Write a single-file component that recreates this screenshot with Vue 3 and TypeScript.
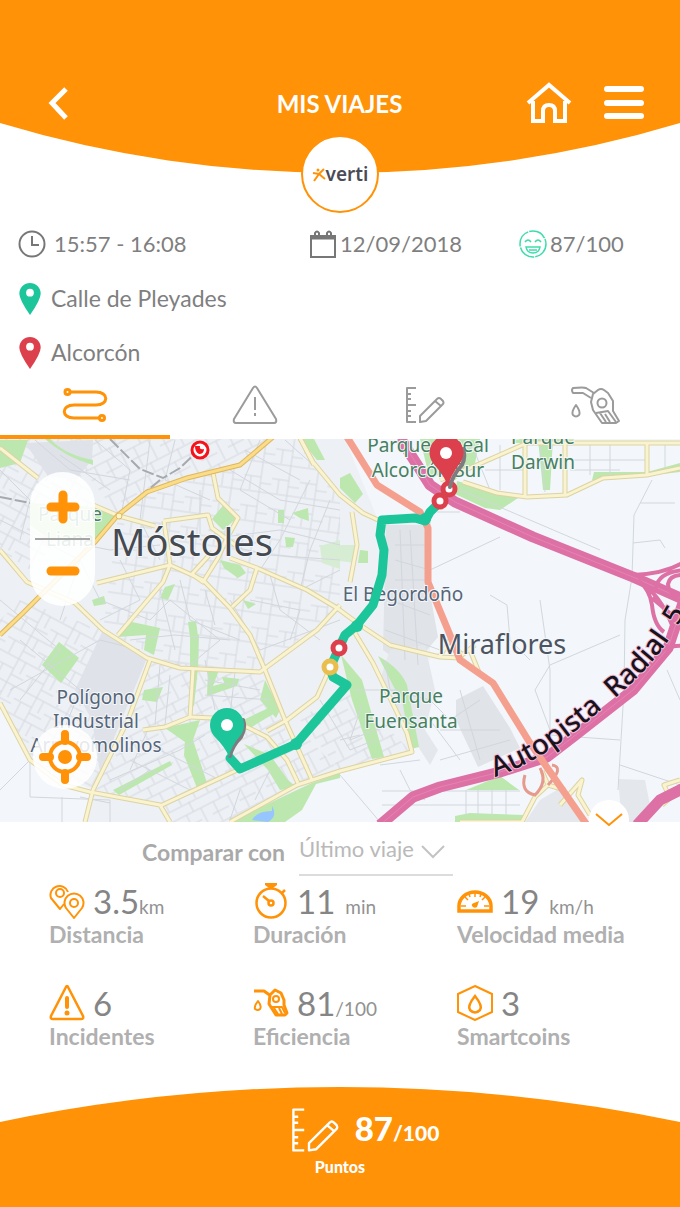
<script setup lang="ts">
import { ref } from 'vue'

interface Metric {
  icon: string
  value: string
  unit: string
  label: string
  spaced: boolean
}

const tabs = [
  { id: 'route', label: 'Ruta', w: 46, h: 40 },
  { id: 'warning', label: 'Incidentes', w: 46, h: 40 },
  { id: 'score', label: 'Puntos', w: 40, h: 40 },
  { id: 'fuel', label: 'Eficiencia', w: 50, h: 40 },
]
const activeTab = ref('route')
const compareWith = ref('last')

const metrics: Metric[] = [
  { icon: 'pins', value: '3.5', unit: 'km', label: 'Distancia', spaced: false },
  { icon: 'timer', value: '11', unit: 'min', label: 'Duración', spaced: true },
  { icon: 'gauge', value: '19', unit: 'km/h', label: 'Velocidad media', spaced: true },
  { icon: 'alert', value: '6', unit: '', label: 'Incidentes', spaced: false },
  { icon: 'nozzle', value: '81', unit: '/100', label: 'Eficiencia', spaced: false },
  { icon: 'coin', value: '3', unit: '', label: 'Smartcoins', spaced: false },
]

const roads: string[] = [
  'M0 448L38 478M93 505L119 516L155 526',
  'M164 521L208 515L212 528L235 545',
  'M213 473L218 498L238 518L226 540L218 558L203 582L192 574L212 552',
  'M164 521L170 565L163 582L118 635',
  'M97 583L170 565L203 580L230 608L250 635L265 670L285 720L312 780',
  'M230 558L257 568L307 590L337 608L360 625L390 645L440 657L460 658L497 687',
  'M257 568L250 590L232 607',
  'M300 438L313 462L340 495L363 513L378 520',
  'M0 550L27 582L75 603L103 630L147 658L180 668L260 672L317 630L340 605',
  'M150 660L128 720L93 790L85 822',
  'M0 703L30 760L63 785L90 792L160 805L170 822',
  'M160 806L233 772L296 744',
  'M193 670L190 717L165 727L143 730',
  'M190 717L213 718L247 727L267 737L287 760L298 783',
  'M230 822L297 785L340 771L412 752L407 733L373 663L355 633',
  'M267 731L287 720L317 697L330 668',
  'M352 512L357 545L350 582',
  'M440 480L470 468L527 443L680 443',
  'M463 482L497 493L527 497L567 495L603 478L647 475L680 468',
  'M525 443V497M565 443V495M647 443V475',
  'M440 656L450 640L462 655L475 645M470 650L480 675',
  'M460 822L522 822L535 797L548 785L565 790M560 805L582 780L578 795L590 815',
  'M662 805L670 798L664 785L680 780M548 785L542 771M300 438L314 465',
]

const streets: string[] = [
  'M0 470L30 500L20 540M0 520L80 560L100 600M0 600L60 650L20 700M20 640L80 690L60 740M10 690L100 640L140 650',
  'M150 440L140 520L160 560M175 440L165 480L210 500M200 490L200 540L280 530L340 545M230 470L280 500L340 510M245 450L300 480',
  'M260 440L240 490L290 520M285 440L330 480M310 480L280 540L260 570M330 500L310 550L300 590L340 570M225 545L270 555L340 560',
  'M100 600L150 620L170 600L220 640L190 665M120 560L140 600L100 620M180 580L190 620L240 640M205 590L215 625M270 575L280 610L320 640',
  'M250 600L300 610L290 640M130 640L175 635L230 640M160 590L175 650M60 540L110 550L160 545M230 600L260 650L340 620',
  'M95 440L130 470L120 520M60 455L110 490M205 660L215 710M235 672L230 715M160 665L155 725M170 675L165 725M205 680L260 690M205 695L270 700',
  'M140 740L220 780M130 760L190 790M110 780L180 750L205 735M120 790L150 770M240 790L230 820M270 770L255 800M150 725L130 770',
  'M0 790L30 760L30 797L110 800V822M62 797V822M80 797L110 803M35 440L70 470L130 480M90 530L60 620',
  'M437 512H460M430 515V570L500 537M490 595L507 605L510 640L530 660M540 600L550 670L550 735L620 740M550 730L535 690L550 665L620 635',
  'M652 480L634 515L632 577L625 620L624 690L618 790M640 503H675M633 543L660 540L665 548M340 775L380 822M460 490L600 550M620 765L680 785M667 670L680 700',
  'M355 690L400 690M362 705L350 740L400 720M340 740L360 735M320 700L350 750L375 740M400 770L410 790L425 800M380 765L420 760',
  'M470 440L490 490M500 445V490M540 443L545 492M590 443V475M570 460H647M570 470H620M485 470H525M665 443V470M610 443V475',
  'M400 530L405 660M410 530L418 665M395 560L430 570M390 600L430 615M385 630L440 650M395 580H425M395 545H425',
  'M385 660L390 690L430 700M430 700L450 720L480 700M440 730L500 730M460 690L480 760M430 720L460 760M440 760L510 740',
]
</script>

<template>
  <div class="screen">
    <svg class="defs" aria-hidden="true">
      <defs>
        <symbol id="route" viewBox="0 0 46 40">
          <g fill="none" stroke="currentColor" stroke-width="3">
            <path d="M8 7H34C47 7 47 20 34 20H12C-1 20 -1 33 12 33H37" />
            <circle cx="5.500" cy="7" r="2.500" /><circle cx="40" cy="33" r="2.500" />
          </g>
        </symbol>
        <symbol id="warning" viewBox="0 0 46 40">
          <g fill="none" stroke="currentColor" stroke-width="2" stroke-linejoin="round">
            <path d="M21 3Q23 0 25 3L44 34Q45 38 42 38H4Q1 38 2 34Z" />
            <path d="M23 12V25M23 28V31" />
          </g>
        </symbol>
        <symbol id="score" viewBox="0 0 40 40">
          <g fill="none" stroke="currentColor" stroke-width="2" stroke-linejoin="round">
            <path d="M11 3H2V37H11M2 9H6M2 14H6M2 20H11M2 26H6M2 31H6" />
            <path d="M15 37V31L32 14Q34 12 36 14L38 16Q39 18 38 19L21 36L15 37ZM30 16L36 21" />
          </g>
        </symbol>
        <symbol id="fuel" viewBox="0 0 50 40">
          <g fill="none" stroke="currentColor" stroke-width="2" stroke-linejoin="round">
            <path d="M23 9L28 5Q31 3 34 5L38 8L43 16V26L49 36L46 38H32L23 25L21 17Z" />
            <path d="M24 8L16 3Q14 2 3 3Q1 5 3 8H13L21 13" />
            <circle cx="32" cy="18" r="4.500" /><path d="M26 28L38 26L46 37M30 28L36 37M35 29L40 37M6 20Q11 27 9 30Q6 33 3 30Q1 27 6 20Z" />
          </g>
        </symbol>
        <symbol id="pins" viewBox="0 0 36 36">
          <g fill="none" stroke="currentColor" stroke-width="2" stroke-linejoin="round">
            <path d="M19 9A9 9 0 1 0 2 15L11 26L15 21" /><circle cx="11" cy="10" r="4" />
            <path d="M25 35L17 25A9.500 9.500 0 1 1 33 25Z" /><circle cx="25" cy="20" r="4" />
          </g>
        </symbol>
        <symbol id="timer" viewBox="0 0 36 36">
          <g fill="none" stroke="currentColor" stroke-width="2.500">
            <circle cx="18" cy="20" r="14.500" /><circle cx="18" cy="20" r="2.500" />
            <path d="M16 18L10 13M18 2V6M29 10L32 7" />
          </g>
          <path d="M12 0H24V2L20 5H16L12 2Z" fill="currentColor" />
        </symbol>
        <symbol id="gauge" viewBox="0 0 36 36">
          <path d="M2 28V23A16 14 0 0 1 34 23V28Z" fill="none" stroke="currentColor" stroke-width="3.500" />
          <path d="M18 10V14M8 14L11 17M28 14L25 17M4 23H9M27 23H32M12 11L13 14M24 11L23 14" stroke="currentColor" stroke-width="1.500" />
          <path d="M22 18L20 24Q17 26 15 23Q14 21 17 20Z" fill="currentColor" />
        </symbol>
        <symbol id="alert" viewBox="0 0 36 36">
          <path d="M17 2Q18 0 19 2L34 31Q35 34 32 34H4Q1 34 2 31Z" fill="none" stroke="currentColor" stroke-width="2.500" />
          <path d="M18 13V22" stroke="currentColor" stroke-width="4" stroke-linecap="round" /><circle cx="18" cy="28" r="2.500" fill="currentColor" />
        </symbol>
        <symbol id="nozzle" viewBox="0 0 36 36">
          <g fill="none" stroke="currentColor" stroke-width="3" stroke-linejoin="round">
            <path d="M1 6H11L18 11M17 10L22 5L28 8L31 15V20L34 28L32 30H23L16 19Z" />
            <circle cx="23" cy="14" r="3" stroke-width="2" /><path d="M19 22H29L32 28M21 23L25 29M26 23L29 29" stroke-width="2" />
            <path d="M5 16Q9 21 7 24Q5 26 2 24Q1 21 5 16Z" stroke-width="2" />
          </g>
        </symbol>
        <symbol id="coin" viewBox="0 0 36 36">
          <path d="M18 1L35 9V27L18 35L1 27V9Z" fill="none" stroke="currentColor" stroke-width="2" />
          <path d="M18 11Q26 21 23 25Q18 30 13 25Q10 21 18 11Z" fill="none" stroke="currentColor" stroke-width="2.500" />
        </symbol>
        <symbol id="place" viewBox="0 0 24 34">
          <path d="M12 34Q1 18 1 12A11 11 0 0 1 23 12Q23 18 12 34Z" fill="currentColor" /><circle cx="12" cy="11" r="4" fill="#fff" />
        </symbol>
      </defs>
    </svg>

    <header class="header">
      <svg class="curve" viewBox="0 0 680 174" preserveAspectRatio="none" aria-hidden="true">
        <path d="M0 0H680V123A1181 1181 0 0 1 0 123Z" fill="#ff9207" />
      </svg>
      <nav class="bar">
        <button class="plain" type="button" aria-label="Volver">
          <svg width="24" height="36" viewBox="0 0 24 36"><path d="M19 4L5 18L19 33" fill="none" stroke="#fff" stroke-width="5" /></svg>
        </button>
        <h1>MIS VIAJES</h1>
        <div class="actions">
          <button class="plain" type="button" aria-label="Inicio">
            <svg width="46" height="42" viewBox="0 0 46 42">
              <path d="M2 21L23 3L44 21M7 19V39H17V29Q17 23 23 23Q29 23 29 29V39H39V19" fill="none" stroke="#fff" stroke-width="4" />
            </svg>
          </button>
          <button class="plain" type="button" aria-label="Menú">
            <svg width="40" height="36" viewBox="0 0 40 36">
              <path d="M3 4H37M3 18H37M3 31H37" stroke="#fff" stroke-width="6" stroke-linecap="round" />
            </svg>
          </button>
        </div>
      </nav>
      <div class="brand">
        <svg width="14" height="18" viewBox="0 0 14 18" aria-hidden="true">
          <path d="M1 8L7 9L12 4M7 9L2 16M7 9L13 14" fill="none" stroke="#ff9207" stroke-width="2" /><circle cx="6" cy="5" r="1.500" fill="#ff9207" />
        </svg>
        <span>verti</span>
      </div>
    </header>

    <section class="trip">
      <div class="facts">
        <span class="fact clock">
          <svg width="28" height="28" viewBox="0 0 28 28" fill="none" stroke="#777" stroke-width="2"><circle cx="14" cy="14" r="12.500" /><path d="M14 6V15H21" /></svg>
          15:57 - 16:08
        </span>
        <span class="fact">
          <svg width="28" height="28" viewBox="0 0 28 28" fill="none" stroke="#777" stroke-width="2"><path d="M2 6H26V27H2Z" /><path d="M2 8H26" stroke-width="3" /><path d="M6 8V3Q8 0 10 3V8M18 8V3Q20 0 22 3V8" /></svg>
          12/09/2018
        </span>
        <span class="fact">
          <svg width="28" height="28" viewBox="0 0 28 28" fill="none" stroke="#3fdcab" stroke-width="1.500"><circle cx="14" cy="14" r="13" stroke-dasharray="18 1" /><path d="M6 12Q9 8 12 12M16 12Q19 8 22 12M7 17H21Q20 23 14 23Q8 23 7 17ZM10 20H18" /></svg>
          87/100
        </span>
      </div>
      <div class="place start"><svg width="24" height="33"><use href="#place" /></svg><span>Calle de Pleyades</span></div>
      <div class="place end"><svg width="24" height="33"><use href="#place" /></svg><span>Alcorcón</span></div>
    </section>

    <div class="tabs" role="tablist">
      <button
        v-for="tab in tabs"
        :key="tab.id"
        type="button"
        role="tab"
        :aria-label="tab.label"
        :aria-selected="activeTab === tab.id"
        :class="['tab', { active: activeTab === tab.id }]"
        @click="activeTab = tab.id"
      >
        <svg :width="tab.w" :height="tab.h"><use :href="'#' + tab.id" /></svg>
      </button>
    </div>

    <section class="map">
      <svg class="canvas" viewBox="0 439 680 383" role="img" aria-label="Mapa del viaje">
        <defs>
          <pattern id="blocksA" width="34" height="26" patternUnits="userSpaceOnUse" patternTransform="rotate(28)">
            <path d="M0 1H34M0 12H20M20 0V26M8 12V26M28 1V14M20 18H34" fill="none" stroke="#d5d9e0" />
          </pattern>
          <pattern id="blocksB" width="30" height="32" patternUnits="userSpaceOnUse" patternTransform="rotate(-27)">
            <path d="M0 1H30M0 11H30M0 22H18M14 0V11M6 11V32M22 11V32" fill="none" stroke="#d5d9e0" />
          </pattern>
          <pattern id="blocksC" width="28" height="30" patternUnits="userSpaceOnUse" patternTransform="rotate(8)">
            <path d="M0 1H28M0 16H17M17 0V30M7 16V30M17 22H28" fill="none" stroke="#d5d9e0" />
          </pattern>
        </defs>
        <rect y="439" width="680" height="383" fill="#f3f7fb" />
        <path d="M0 439H345L378 520L430 525V660L390 650L412 752L340 772L230 822H85L93 790L30 760L0 703Z" fill="#edf0f4" />
        <path d="M0 439H60L95 500L30 570L0 550ZM20 600L103 630L147 658L93 790L30 760L0 703V620Z" fill="url(#blocksA)" />
        <path d="M60 439H273L240 465L147 492L118 515Z" fill="url(#blocksB)" />
        <path d="M118 515L147 492L240 465L273 439H300L340 495V605L260 672L180 668L103 630Z" fill="url(#blocksC)" />
        <path d="M150 660L260 672L290 740L233 772L160 806L93 790Z" fill="url(#blocksB)" />
        <path d="M160 806L310 740L340 771L297 785L230 822H170ZM300 720L345 685L412 752L340 771Z" fill="url(#blocksB)" />
        <path d="M25 443L93 440L92 460L75 480L48 476ZM103 630L147 658L100 772L92 720L75 690Z" fill="#dfe2e8" />
        <path d="M386 525L426 525L428 582L438 637L410 670L383 650ZM456 700L483 686L510 728L520 748L478 767L456 720Z" fill="#e0e3e8" />
        <path d="M390 650L425 645L435 690L425 730L438 750L430 765L417 745L407 733L380 680ZM618 779L645 780L652 815L640 822H622ZM540 800L562 787L585 822H525Z" fill="#e4e7ec" />
        <g fill="#bce7ae">
          <path d="M0 440H28L20 463L8 466L0 468Z" />
          <path d="M50 439Q65 455 93 460V465Q65 457 45 439Z" />
          <path d="M30 503L93 507L117 517L95 542L50 540L30 525Z" />
          <path d="M225 503L237 518L223 530L212 519Z" />
          <path d="M300 439H314L325 460L317 460Z" />
          <path d="M292 513L308 508L309 521L300 518ZM278 510H284V523H278ZM285 537L295 538L293 547H286Z" />
          <path d="M320 546L340 540V569L322 563Z" fill="#d6edd4" />
          <path d="M220 560L240 565L246 573L238 578L224 568Z" />
          <path d="M92 600L104 596L106 604L94 606ZM165 587L175 584L168 600L160 598ZM243 600L256 604L248 609ZM188 622L196 621L198 636L190 637Z" />
          <path d="M118 637L132 622L160 628L154 655L144 650L146 635Z" />
          <path d="M190 635H199L198 668L194 706L190 705ZM59 642L79 658L61 683L42 665ZM144 690L163 687L157 702L142 700Z" />
          <path d="M208 670H219L213 686L239 679L237 686L207 696ZM222 677L240 679L225 685Z" />
          <path d="M165 728L200 720L193 740L207 783L197 788L184 755L185 742ZM113 790L170 761L172 765L119 795Z" />
          <path d="M241 721L277 704L280 710L245 731ZM265 680L280 710L276 718L260 700ZM244 744L270 755L288 780L296 787L280 790L268 770Z" />
          <path d="M230 822L297 790L312 783L340 773V778L316 784L302 810L285 822ZM341 655L362 680L384 757L372 759L352 700ZM378 656Q400 668 407 685L419 747L411 749L403 705Z" />
          <path d="M440 439H480L475 463L455 480L440 468ZM420 439H442L446 470L430 480ZM457 481L500 493L518 498L500 510L485 508L455 494Z" />
          <path d="M340 478L350 473L363 494L355 503L340 488ZM360 550L368 551V563L358 563Z" />
          <path d="M340 545H355V563L340 561Z" fill="#d6edd4" />
          <path d="M594 472L647 472L680 463V472L620 479L592 480ZM538 439H553L550 490H543ZM512 439H574V443H512Z" />
          <path d="M466 790L500 776L519 790ZM455 816L470 813L525 815V822H455Z" />
        </g>
        <path d="M252 820Q257 811 272 811V806Q278 816 268 822Z" fill="#96c5ff" />
        <g class="streets"><path v-for="(d, i) in streets" :key="i" :d="d" /></g>
        <path d="M382 791H520M382 805H520M466 790V815M478 790V815M492 790V815M506 790V815" class="grid-lines" />
        <g class="road-case"><path v-for="(d, i) in roads" :key="i" :d="d" /></g>
        <g class="road-fill"><path v-for="(d, i) in roads" :key="i" :d="d" /></g>
        <path class="rail" d="M0 497L30 503M110 439L140 469L163 478L180 468L205 444M160 480L118 515" />
        <path class="main-case" d="M0 635L23 613L38 598L95 542L118 515L147 492L187 478L240 465L273 437" />
        <path class="main-fill" d="M0 635L23 613L38 598L95 542L118 515L147 492L187 478L240 465L273 437" />
        <circle cx="119" cy="516" r="3" fill="#fff4c7" stroke="#dfb858" />
        <path class="pink wide" d="M400 438L430 485L455 502L533 537L633 577L685 600" />
        <path class="pink-center" d="M400 438L430 485L455 502L533 537L633 577L685 600" />
        <path class="pink wide" d="M380 825L413 797L440 787L500 772L547 757L573 737L633 690L668 648L684 600" />
        <path class="pink-center" d="M380 825L413 797L440 787L500 772L547 757L573 737L633 690L668 648L684 600" />
        <path class="pink wide" d="M637 825L660 800L684 788" />
        <path class="pink" d="M633 575Q665 574 684 562M638 580Q650 590 652 605Q654 625 664 632M642 584Q660 595 672 625M656 588Q658 572 684 570M684 596Q668 596 668 584Q670 574 684 575M652 598L672 615M662 650Q674 645 684 646" />
        <path d="M525 775Q520 792 535 795Q548 782 540 768M552 765Q565 767 548 785" fill="none" stroke="#e59a8d" stroke-width="3" />
        <path class="salmon" d="M347 437L377 485L420 512L428 528L428 582L450 635L460 660L493 683L530 743L587 825" />

        <g class="park-label">
          <text x="428" y="452" text-anchor="middle">Parque Lineal</text>
          <text x="428" y="477" text-anchor="middle">Alcorcón Sur</text>
          <text x="543" y="444" text-anchor="middle">Parque</text>
          <text x="543" y="469" text-anchor="middle">Darwin</text>
          <text x="411" y="703" text-anchor="middle">Parque</text>
          <text x="411" y="728" text-anchor="middle">Fuensanta</text>
          <text x="70" y="521" text-anchor="middle">Parque</text>
          <text x="70" y="546" text-anchor="middle">Liana</text>
        </g>
        <g class="area-label">
          <text x="403" y="601" text-anchor="middle">El Begordoño</text>
          <text x="96" y="704" text-anchor="middle">Polígono</text>
          <text x="96" y="728" text-anchor="middle">Industrial</text>
          <text x="96" y="752" text-anchor="middle">Arroyomolinos</text>
        </g>
        <text class="city" x="192" y="556" text-anchor="middle">Móstoles</text>
        <text class="town" x="502" y="654" text-anchor="middle">Miraflores</text>
        <path id="radial" d="M495 777C540 762 573 734 614 699C646 671 668 648 692 600" fill="none" />
        <text class="highway"><textPath href="#radial">Autopista&#160; Radial&#160; 5</textPath></text>

        <path class="track" d="M449 488L440 502L430 512L425 521L415 518L382 520L380 535L384 550L382 575L373 605L357 625L345 635L339 648L330 668L333 677L347 685L296 744L240 769L230 758" />
        <circle cx="425" cy="519" r="6" fill="#1dc69a" /><circle cx="357" cy="626" r="6" fill="#1dc69a" /><circle cx="296" cy="744" r="6" fill="#1dc69a" />
        <g fill="#fff" stroke-width="5">
          <circle cx="449" cy="489" r="6" stroke="#dc404c" /><circle cx="440" cy="501" r="6" stroke="#dc404c" />
          <circle cx="339" cy="648" r="6" stroke="#dc404c" /><circle cx="330" cy="667" r="6" stroke="#e9be4e" />
        </g>
        <path d="M450 487Q452 476 462 465Q466 457 463 449M230 756Q232 746 241 737Q246 728 243 720" fill="none" stroke="#7d7d80" stroke-width="4" stroke-linecap="round" />
        <path d="M448 487Q446 478 433 463A17 17 0 1 1 460 463Q450 476 448 487Z" fill="#dc404c" /><circle cx="446" cy="453" r="6" fill="#fff" />
        <path d="M229 757Q226 748 214 736A17 17 0 1 1 240 736Q231 746 229 757Z" fill="#1dc69a" /><circle cx="227" cy="725" r="6" fill="#fff" />
        <circle cx="200" cy="450" r="8" fill="#fff" stroke="#f5131b" stroke-width="3" /><path d="M195 446L200 446Q199 450 204 449Q204 454 199 454Q195 452 195 446Z" fill="#f5131b" />
      </svg>

      <div class="zoom">
        <button type="button" aria-label="Acercar"><svg width="34" height="34" viewBox="0 0 34 34"><path d="M17 5V29M5 17H29" /></svg></button>
        <button type="button" aria-label="Alejar"><svg width="34" height="34" viewBox="0 0 34 34"><path d="M5 17H29" /></svg></button>
      </div>
      <button class="locate" type="button" aria-label="Mi ubicación">
        <svg width="54" height="56" viewBox="0 0 54 56" fill="none" stroke="#ff9207">
          <circle cx="27" cy="28" r="15" fill="#fff" stroke-width="4" /><circle cx="27" cy="28" r="7" fill="#ff9207" stroke="none" />
          <path d="M27 5V12M27 44V51M5 28H12M42 28H49" stroke-width="8" stroke-linecap="round" />
        </svg>
      </button>
      <button class="expand" type="button" aria-label="Mostrar detalles">
        <svg width="30" height="16" viewBox="0 0 30 16"><path d="M2 2L15 13L28 2" fill="none" stroke="#ff9207" stroke-width="2" /></svg>
      </button>
    </section>

    <section class="compare">
      <label for="compare">Comparar con</label>
      <span class="picker">
        <select id="compare" v-model="compareWith"><option value="last">Último viaje</option></select>
        <svg width="24" height="14" viewBox="0 0 24 14" aria-hidden="true"><path d="M1 1L12 12L23 1" fill="none" stroke="#c3c3c3" stroke-width="2" /></svg>
      </span>
    </section>

    <section class="metrics">
      <div v-for="m in metrics" :key="m.label" class="metric">
        <div class="reading">
          <svg width="36" height="36"><use :href="'#' + m.icon" /></svg>
          <span class="value">{{ m.value }}</span><span v-if="m.unit" :class="['unit', { spaced: m.spaced }]">{{ m.unit }}</span>
        </div>
        <div class="caption">{{ m.label }}</div>
      </div>
    </section>

    <footer class="footer">
      <svg class="curve" viewBox="0 0 680 120" preserveAspectRatio="none" aria-hidden="true">
        <path d="M0 120V35A1669 1669 0 0 1 680 35V120Z" fill="#ff9207" />
      </svg>
      <div class="total">
        <svg width="48" height="48"><use href="#score" /></svg>
        <strong>87</strong><b>/100</b>
      </div>
      <div class="points">Puntos</div>
    </footer>
  </div>
</template>

<style>
body { margin: 0; background: #fff; }
</style>

<style scoped>
.screen { min-height: 100vh; display: flex; flex-direction: column; font-family: Lato, "Open Sans", sans-serif; color: #7f7f7f; overflow: hidden; }
.defs { position: absolute; width: 0; height: 0; }
button { font: inherit; border: 0; background: none; padding: 0; cursor: pointer; }
svg { display: block; flex: none; }
.curve { position: absolute; inset: 0; width: 100%; height: 100%; }

.header { position: relative; height: 174px; box-sizing: border-box; padding: 80px 36px 0 47px; }
.bar { position: relative; display: grid; grid-template-columns: 1fr auto 1fr; align-items: center; height: 46px; }
h1 { margin: 0 12px 0 0; font-size: 24px; line-height: 28px; font-weight: 700; color: #fff; padding-top: 2px; }
.actions { display: flex; align-items: center; justify-content: flex-end; gap: 32px; }
.brand { position: absolute; left: 50%; top: 135px; width: 74px; height: 74px; margin-left: -39px; border: 2px solid #ff9207; border-radius: 50%; background: #fff; display: flex; align-items: center; justify-content: center; color: #4b4b57; font: 600 19px/24px "Noto Sans", sans-serif; }

.trip { padding: 42px 0 0 18px; font-size: 22px; }
.facts { display: grid; grid-template-columns: 291fr 210fr 161fr; height: 55px; align-items: center; }
.fact { display: flex; align-items: center; gap: 3px; white-space: nowrap; }
.clock { gap: 8px; }
.place { display: flex; align-items: center; gap: 9px; height: 54px; font-size: 23px; }
.start svg { color: #1dc69a; }
.end svg { color: #dc404c; }

.tabs { display: grid; grid-template-columns: repeat(4, 1fr); height: 60px; }
.tab { display: flex; align-items: center; justify-content: center; color: #9b9b9b; border-bottom: 4px solid transparent; padding-bottom: 4px; box-sizing: border-box; }
.tab.active { color: #ff9207; border-color: #ff9207; }

.map { position: relative; }
.canvas { width: 100%; height: auto; }
.streets path, .grid-lines { fill: none; stroke: #d2d7dd; stroke-width: 1; }
.road-case path { fill: none; stroke: #ddd3a2; stroke-width: 5; stroke-linejoin: round; }
.road-fill path { fill: none; stroke: #faf3cf; stroke-width: 3; stroke-linejoin: round; }
.main-case { fill: none; stroke: #dfb858; stroke-width: 5; }
.main-fill { fill: none; stroke: #fbdc8b; stroke-width: 3; }
.rail { fill: none; stroke: #a6a9ad; stroke-width: 2; stroke-dasharray: 12 3; }
.salmon { fill: none; stroke: #f5a08e; stroke-width: 7; stroke-linejoin: round; }
.pink { fill: none; stroke: #dd71a5; stroke-width: 4; }
.pink.wide { stroke-width: 11; stroke-linejoin: round; }
.pink-center { fill: none; stroke: #e583b2; stroke-width: 1; }
.track { fill: none; stroke: #1dc69a; stroke-width: 9; stroke-linejoin: round; stroke-linecap: round; }
text { font-family: "Noto Sans", "Open Sans", sans-serif; paint-order: stroke; stroke: #f4f7fa; stroke-width: 2px; }
.park-label { font-size: 19px; fill: #46805f; }
.area-label { font-size: 19px; fill: #566579; }
.city { font-size: 38px; fill: #454a51; }
.town { font-size: 27px; fill: #4c5361; }
.highway { font-size: 28px; font-weight: 500; fill: #17131c; stroke: #f3bdd6; }

.zoom { position: absolute; left: 30px; top: 33px; width: 65px; height: 134px; border-radius: 33px; background: rgba(255, 255, 255, 0.88); display: flex; flex-direction: column; }
.zoom button { flex: 1; display: flex; justify-content: center; align-items: center; margin: 0 5px; }
.zoom button:first-child { border-bottom: 2px solid #a5a5a5; padding-top: 4px; }
.zoom button:last-child { padding-bottom: 4px; }
.zoom path { stroke: #ff9207; stroke-width: 9; stroke-linecap: round; }
.locate { position: absolute; left: 33px; bottom: 33px; width: 64px; height: 64px; border-radius: 50%; background: rgba(255, 255, 255, 0.85); display: flex; align-items: center; justify-content: center; }
.expand { position: absolute; right: 51px; bottom: -18px; width: 40px; height: 40px; border-radius: 50%; background: #fff; display: flex; align-items: center; justify-content: center; }

.compare { display: flex; justify-content: center; align-items: flex-end; gap: 14px; padding: 12px 85px 0 0; font-size: 22px; color: #a9a9a9; }
.compare label { font-size: 23px; line-height: 28px; font-weight: 700; padding-bottom: 10px; }
.picker { position: relative; display: block; border-bottom: 2px solid #dcdcdc; }
.picker select { appearance: none; border: 0; background: none; font: inherit; color: #b9b9b9; width: 154px; height: 40px; padding: 0 34px 12px 0; display: block; }
.picker svg { position: absolute; right: 8px; top: 11px; pointer-events: none; }

.metrics { display: grid; grid-template-columns: repeat(3, 1fr); row-gap: 36px; padding: 4px 19px 0 49px; }
.reading { display: flex; align-items: baseline; height: 42px; line-height: 42px; }
.reading svg { align-self: center; color: #ff9207; }
.value { font-size: 33px; margin-left: 8px; color: #858585; }
.unit { font-size: 19px; color: #929292; }
.unit.spaced { margin-left: 10px; }
.caption { font-size: 23px; line-height: 24px; color: #b0b0b0; font-weight: 700; white-space: nowrap; }

.footer { position: relative; margin-top: auto; height: 120px; box-sizing: border-box; padding-top: 18px; color: #fff; text-align: center; }
.total { position: relative; display: flex; justify-content: center; align-items: baseline; padding-left: 50px; height: 50px; line-height: 46px; }
.total svg { align-self: center; margin-right: 16px; }
.total strong { font-size: 33px; font-weight: 900; }
.total b { font-size: 21px; font-weight: 900; }
.points { position: relative; font-size: 16px; line-height: 24px; font-weight: 900; }
</style>
